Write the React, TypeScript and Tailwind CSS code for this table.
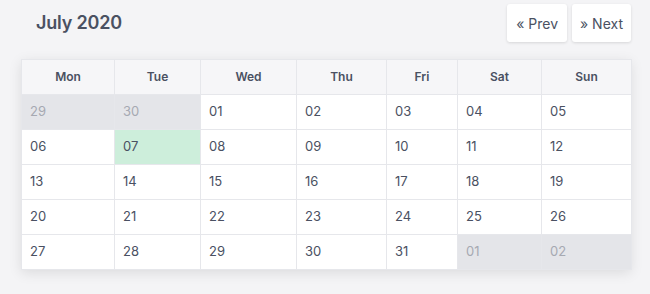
import React from "react";

type Cell = { label: string; muted?: boolean; today?: boolean };

const days = ["Mon", "Tue", "Wed", "Thu", "Fri", "Sat", "Sun"];
const widths = [93, 86, 96, 90, 71, 84, 90];

function buildWeeks(): Cell[][] {
  const cells: Cell[] = [
    { label: "29", muted: true },
    { label: "30", muted: true },
  ];
  for (let d = 1; d <= 31; d++) {
    cells.push({ label: String(d).padStart(2, "0"), today: d === 7 });
  }
  cells.push({ label: "01", muted: true }, { label: "02", muted: true });
  const weeks: Cell[][] = [];
  for (let i = 0; i < cells.length; i += 7) weeks.push(cells.slice(i, i + 7));
  return weeks;
}

export default function App() {
  const weeks = buildWeeks();
  return (
    <div
      className="w-[650px] h-[294px] bg-[#f4f4f6] text-[#4a5060] overflow-hidden"
      style={{ fontFamily: "Inter, 'Noto Sans', sans-serif" }}
    >
      <div className="flex items-center justify-between pl-[36px] pr-[19px] pt-[4px]">
        <h1 className="text-[18px] font-semibold tracking-[-0.2px] leading-[38px] text-[#4a5162]">
          July 2020
        </h1>
        <div className="flex gap-[5px]">
          <button className="h-[38px] px-[9px] bg-white rounded-[3px] shadow-[0_1px_3px_rgba(0,0,0,0.12)] text-[14px] text-[#4a5162]">
            « Prev
          </button>
          <button className="h-[38px] px-[8px] bg-white rounded-[3px] shadow-[0_1px_3px_rgba(0,0,0,0.12)] text-[14px] text-[#4a5162]">
            » Next
          </button>
        </div>
      </div>
      <div className="ml-[21px] mt-[17px] w-[610px] shadow-[0_3px_12px_rgba(0,0,0,0.10)]">
        <table className="w-[610px] border-collapse table-fixed text-[13px]">
          <colgroup>
            {widths.map((w, i) => (
              <col key={i} style={{ width: w }} />
            ))}
          </colgroup>
          <thead>
            <tr className="h-[35px] bg-[#f6f6f8]">
              {days.map((d) => (
                <th
                  key={d}
                  className="border border-[#e6e7eb] font-semibold text-[12px] text-[#4a5162] text-center"
                >
                  {d}
                </th>
              ))}
            </tr>
          </thead>
          <tbody>
            {weeks.map((week, wi) => (
              <tr key={wi} className="h-[35px]">
                {week.map((c, ci) => (
                  <td
                    key={ci}
                    className={
                      "border border-[#e6e7eb] pl-[8px] text-left " +
                      (c.muted
                        ? "bg-[#e4e5e9] text-[#a6a9b2]"
                        : c.today
                        ? "bg-[#cdeedb] text-[#4a5162]"
                        : "bg-white text-[#4a5162]")
                    }
                  >
                    {c.label}
                  </td>
                ))}
              </tr>
            ))}
          </tbody>
        </table>
      </div>
    </div>
  );
}
